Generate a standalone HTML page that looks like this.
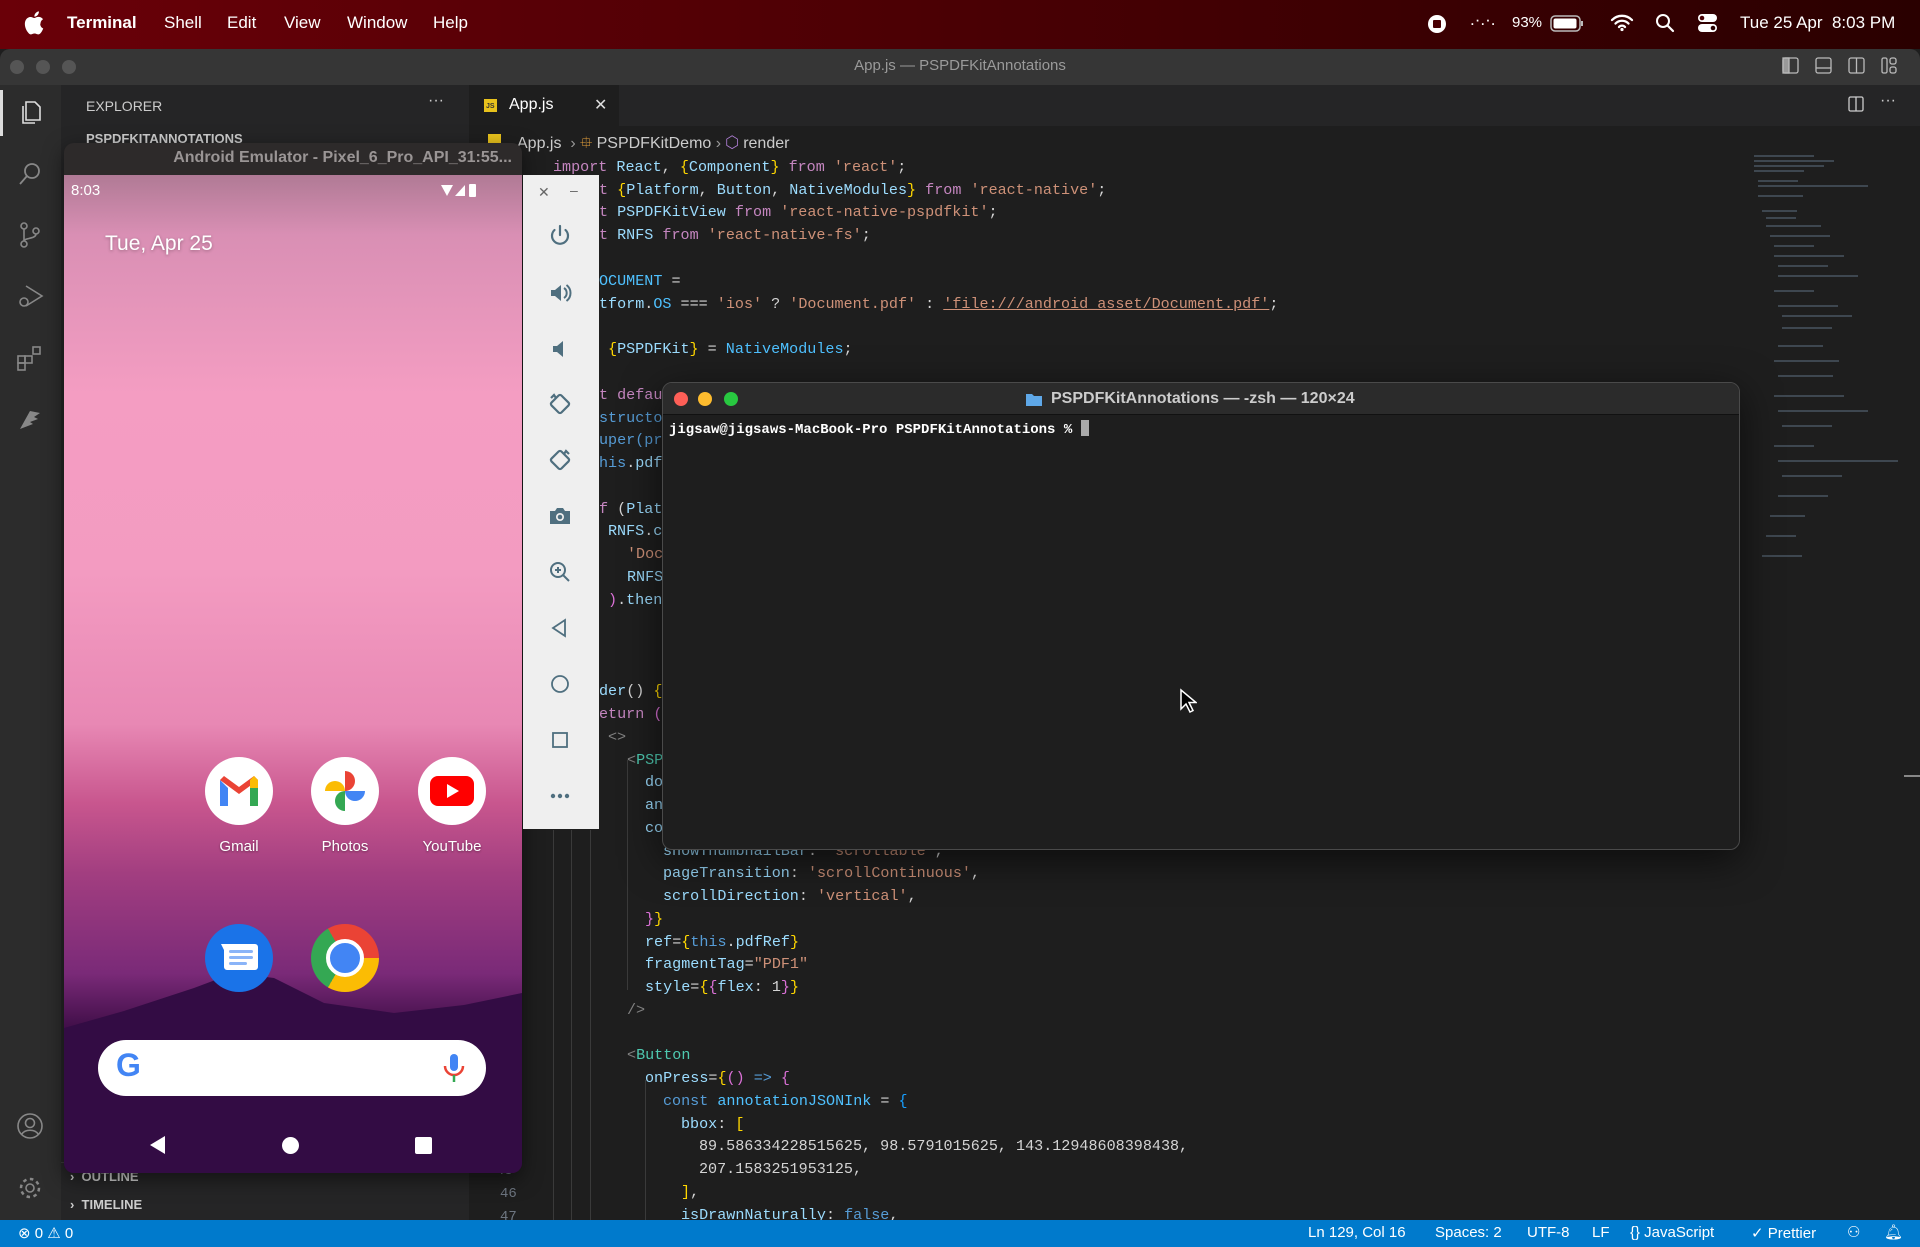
<!DOCTYPE html>
<html><head><meta charset="utf-8"><style>
*{margin:0;padding:0;box-sizing:border-box}
body{width:1920px;height:1247px;overflow:hidden;background:#1e1e1e;font-family:"Liberation Sans",sans-serif;position:relative}
.a{position:absolute}
.menu{left:0;top:0;width:1920px;height:49px;background:linear-gradient(90deg,#6a0008,#4a0004 50%,#2a0000);color:#fff;font-size:17px}
.menu span{position:absolute;top:13px}
.code{font-family:"Liberation Mono",monospace;font-size:15.1px;color:#d4d4d4;white-space:pre;line-height:22.8px}
.k{color:#c586c0}.v{color:#9cdcfe}.t{color:#4ec9b0}.f{color:#4fc1ff}.s{color:#ce9178}.y{color:#ffd700}.p{color:#da70d6}.b{color:#179fff}.c{color:#569cd6}.g{color:#808080}
.ti{position:absolute;left:548px;width:24px;height:24px}
.ic{position:absolute;width:68px;height:68px;border-radius:50%;background:#fff;display:flex;align-items:center;justify-content:center}
.lbl{position:absolute;color:#fff;font-size:15px;width:100px;text-align:center;text-shadow:0 1px 2px rgba(0,0,0,.4)}
.act{position:absolute;left:16px;width:28px;height:28px}
.mm{position:absolute;height:2px;background:#5a6a7a;opacity:.55}
</style></head><body>
<div class="a menu">
<svg class="a" style="left:24px;top:11px" width="20" height="24" viewBox="0 0 20 24"><path d="M16.5 12.7c0-3 2.4-4.4 2.5-4.5-1.4-2-3.5-2.3-4.3-2.3-1.8-.2-3.5 1.1-4.4 1.1-.9 0-2.3-1-3.8-1C4.6 6 2.8 7.2 1.8 9c-2 3.5-.5 8.7 1.5 11.5 1 1.4 2.1 2.9 3.6 2.9 1.4-.1 2-.9 3.7-.9s2.2.9 3.7.9c1.5 0 2.5-1.4 3.4-2.8 1.1-1.6 1.5-3.1 1.5-3.2 0 0-3-1.1-3-4.7zM13.7 4c.8-1 1.3-2.3 1.2-3.6-1.1.1-2.5.8-3.3 1.7-.7.8-1.4 2.2-1.2 3.5 1.3.1 2.5-.6 3.3-1.6z" fill="#fff"/></svg>
<span style="left:67px;font-weight:bold">Terminal</span>
<span style="left:164px">Shell</span>
<span style="left:227px">Edit</span>
<span style="left:284px">View</span>
<span style="left:347px">Window</span>
<span style="left:433px">Help</span>
<svg class="a" style="left:1427px;top:14px" width="20" height="20"><circle cx="10" cy="10" r="9" fill="#fff"/><rect x="6" y="6" width="8" height="8" rx="1" fill="#4a0004"/></svg>
<span style="left:1470px;top:10px">.·.·.</span>
<span style="left:1512px;font-size:15px;top:14px">93%</span>
<svg class="a" style="left:1550px;top:14px" width="36" height="20"><rect x="1" y="2" width="29" height="15" rx="4" fill="none" stroke="#bbb" stroke-width="1.5"/><rect x="3.5" y="4.5" width="23" height="10" rx="2" fill="#fff"/><rect x="31" y="7" width="2" height="5" fill="#bbb"/></svg>
<svg class="a" style="left:1610px;top:12px" width="24" height="20"><path d="M2 8a14 14 0 0 1 20 0M5.5 11.5a9 9 0 0 1 13 0M9 15a4 4 0 0 1 6 0" fill="none" stroke="#fff" stroke-width="2.3" stroke-linecap="round"/><circle cx="12" cy="17.5" r="1.6" fill="#fff"/></svg>
<svg class="a" style="left:1655px;top:13px" width="20" height="20"><circle cx="8" cy="8" r="6" fill="none" stroke="#fff" stroke-width="2"/><path d="M12.5 12.5L18 18" stroke="#fff" stroke-width="2.2" stroke-linecap="round"/></svg>
<svg class="a" style="left:1697px;top:12px" width="22" height="22"><rect x="1" y="2" width="19" height="8" rx="4" fill="#fff"/><circle cx="5" cy="6" r="2.3" fill="#4a0004"/><rect x="1" y="12" width="19" height="8" rx="4" fill="#fff"/><circle cx="16" cy="16" r="2.3" fill="#2a0000"/></svg>
<span style="left:1740px">Tue 25 Apr&nbsp; 8:03 PM</span>
</div>

<!-- window -->
<div class="a" style="left:0;top:49px;width:1920px;height:36px;background:#363636;border-radius:10px 10px 0 0"></div>
<div class="a" style="left:10px;top:60px;width:14px;height:14px;border-radius:50%;background:#555"></div>
<div class="a" style="top:60px;width:14px;height:14px;border-radius:50%;background:#555;left:36px"></div>
<div class="a" style="top:60px;width:14px;height:14px;border-radius:50%;background:#555;left:62px"></div>
<div class="a" style="left:0;width:1920px;top:57px;text-align:center;color:#9a9a9a;font-size:15px">App.js — PSPDFKitAnnotations</div>
<svg class="a" style="left:1782px;top:56px" width="130" height="20" fill="none" stroke="#bbb" stroke-width="1.3"><rect x="1" y="2" width="15" height="15" rx="2"/><rect x="1" y="2" width="6" height="15" fill="#999"/><rect x="34" y="2" width="15" height="15" rx="2"/><path d="M34 12h15"/><rect x="67" y="2" width="15" height="15" rx="2"/><path d="M74.5 2v15"/><rect x="100" y="2" width="5" height="15" rx="1.5"/><rect x="108" y="2" width="6" height="6" rx="2"/><rect x="108" y="11" width="6" height="6" rx="2"/></svg>

<div class="a" style="left:0;top:85px;width:61px;height:1135px;background:#2c2c2c"></div>
<div class="a" style="left:0;top:90px;width:3px;height:46px;background:#ddd"></div>
<svg class="act" style="top:98px" viewBox="0 0 28 28" fill="none" stroke="#ddd" stroke-width="1.6"><path d="M10 4h9l5 5v13H10z M7 8v17h12"/></svg>
<svg class="act" style="top:160px" viewBox="0 0 28 28" fill="none" stroke="#888" stroke-width="1.8"><circle cx="16" cy="11" r="7"/><path d="M11 16l-7 8"/></svg>
<svg class="act" style="top:221px" viewBox="0 0 28 28" fill="none" stroke="#888" stroke-width="1.6"><circle cx="8" cy="5" r="3"/><circle cx="8" cy="23" r="3"/><circle cx="20" cy="10" r="3"/><path d="M8 8v12M20 13c0 5-12 4-12 7"/></svg>
<svg class="act" style="top:282px" viewBox="0 0 28 28" fill="none" stroke="#888" stroke-width="1.6"><path d="M10 4l16 10-16 10"/><circle cx="8" cy="20" r="4"/></svg>
<svg class="act" style="top:344px" viewBox="0 0 28 28" fill="none" stroke="#888" stroke-width="1.6"><rect x="2" y="12" width="7" height="7"/><rect x="9" y="12" width="7" height="7"/><rect x="2" y="19" width="7" height="7"/><rect x="17" y="3" width="7" height="7"/></svg>
<svg class="act" style="top:405px" viewBox="0 0 28 28" fill="#888"><path d="M4 24L14 6l10 2-6 4 4 2-8 3 3 2z"/></svg>
<svg class="act" style="top:1112px" viewBox="0 0 28 28" fill="none" stroke="#888" stroke-width="1.6"><circle cx="14" cy="14" r="12"/><circle cx="14" cy="11" r="4.5"/><path d="M6 22c3-5 13-5 16 0"/></svg>
<svg class="act" style="top:1174px" viewBox="0 0 28 28" fill="none" stroke="#888" stroke-width="2.5"><circle cx="14" cy="14" r="9" stroke-dasharray="3.5 3.5"/><circle cx="14" cy="14" r="4" stroke-width="1.6"/></svg>

<div class="a" style="left:61px;top:85px;width:408px;height:1135px;background:#252526"></div>
<div class="a" style="left:86px;top:98px;color:#ccc;font-size:14px">EXPLORER</div>
<div class="a" style="left:428px;top:92px;color:#ccc;font-size:16px">···</div>
<div class="a" style="left:86px;top:131px;color:#ccc;font-size:13px;font-weight:bold">PSPDFKITANNOTATIONS</div>
<div class="a" style="left:61px;top:1162px;width:408px;height:1px;background:#3a3a3a"></div>
<div class="a" style="left:70px;top:1169px;color:#ccc;font-size:13px;font-weight:bold">›&nbsp; OUTLINE</div>
<div class="a" style="left:70px;top:1197px;color:#ccc;font-size:13px;font-weight:bold">›&nbsp; TIMELINE</div>

<div class="a" style="left:469px;top:85px;width:1451px;height:41px;background:#252526"></div>
<div class="a" style="left:469px;top:85px;width:150px;height:41px;background:#1e1e1e"></div>
<div class="a" style="left:484px;top:99px;width:13px;height:13px;background:#e8c21c;font-size:7px;color:#333;font-weight:bold;padding:4px 0 0 2px">JS</div>
<div class="a" style="left:509px;top:96px;color:#fff;font-size:16px">App.js</div>
<div class="a" style="left:594px;top:95px;color:#ddd;font-size:16px">✕</div>
<svg class="a" style="left:1848px;top:96px" width="16" height="16" fill="none" stroke="#ccc" stroke-width="1.3"><rect x="1" y="1" width="14" height="14" rx="1.5"/><path d="M8 1v14"/></svg>
<div class="a" style="left:1880px;top:92px;color:#ccc;font-size:16px">···</div>
<div class="a" style="left:488px;top:134px;width:13px;height:13px;background:#e8c21c"></div>
<div class="a" style="left:517px;top:132px;color:#ccc;font-size:16px">App.js &nbsp;<span style="color:#999">›</span> <span style="color:#e8a33c">⯐</span> PSPDFKitDemo <span style="color:#999">›</span> <span style="color:#b180d7">⬡</span> render</div>

<!-- code -->
<div class="a code" style="left:0;top:0;width:1740px;height:1220px">
<div class="a" style="left:553px;top:156px"><span class="k">import</span> <span class="v">React</span>, <span class="y">{</span><span class="v">Component</span><span class="y">}</span> <span class="k">from</span> <span class="s">'react'</span>;</div>
<div class="a" style="left:599px;top:179px"><span class="k">t</span> <span class="y">{</span><span class="v">Platform</span>, <span class="v">Button</span>, <span class="v">NativeModules</span><span class="y">}</span> <span class="k">from</span> <span class="s">'react-native'</span>;</div>
<div class="a" style="left:599px;top:201px"><span class="k">t</span> <span class="v">PSPDFKitView</span> <span class="k">from</span> <span class="s">'react-native-pspdfkit'</span>;</div>
<div class="a" style="left:599px;top:224px"><span class="k">t</span> <span class="v">RNFS</span> <span class="k">from</span> <span class="s">'react-native-fs'</span>;</div>
<div class="a" style="left:599px;top:270px"><span class="f">OCUMENT</span> =</div>
<div class="a" style="left:599px;top:293px"><span class="v">tform</span>.<span class="f">OS</span> === <span class="s">'ios'</span> ? <span class="s">'Document.pdf'</span> : <span class="s" style="text-decoration:underline">'file:///android_asset/Document.pdf'</span>;</div>
<div class="a" style="left:608px;top:338px"><span class="y">{</span><span class="v">PSPDFKit</span><span class="y">}</span> = <span class="f">NativeModules</span>;</div>
<div class="a" style="left:599px;top:384px"><span class="k">t defau</span></div>
<div class="a" style="left:599px;top:407px"><span class="c">structo</span></div>
<div class="a" style="left:599px;top:429px"><span class="c">uper(pr</span></div>
<div class="a" style="left:599px;top:452px"><span class="c">his</span>.<span class="v">pdf</span></div>
<div class="a" style="left:599px;top:498px"><span class="k">f</span> (<span class="v">Plat</span></div>
<div class="a" style="left:608px;top:520px"><span class="v">RNFS</span>.<span class="v">c</span></div>
<div class="a" style="left:627px;top:543px"><span class="s">'Doc</span></div>
<div class="a" style="left:627px;top:566px"><span class="v">RNFS</span></div>
<div class="a" style="left:608px;top:589px"><span class="p">)</span>.<span class="v">then</span></div>
<div class="a" style="left:599px;top:680px"><span class="v">der</span>() <span class="y">{</span></div>
<div class="a" style="left:599px;top:703px"><span class="k">eturn</span> <span class="p">(</span></div>
<div class="a" style="left:608px;top:726px"><span class="g">&lt;&gt;</span></div>
<div class="a" style="left:627px;top:749px"><span class="g">&lt;</span><span class="t">PSP</span></div>
<div class="a" style="left:645px;top:771px"><span class="v">do</span></div>
<div class="a" style="left:645px;top:794px"><span class="v">an</span></div>
<div class="a" style="left:645px;top:817px"><span class="v">co</span></div>
<div class="a" style="left:663px;top:840px"><span class="v">showThumbnailBar</span>: <span class="s">'scrollable'</span>,</div>
<div class="a" style="left:663px;top:862px"><span class="v">pageTransition</span>: <span class="s">'scrollContinuous'</span>,</div>
<div class="a" style="left:663px;top:885px"><span class="v">scrollDirection</span>: <span class="s">'vertical'</span>,</div>
<div class="a" style="left:645px;top:908px"><span class="p">}</span><span class="y">}</span></div>
<div class="a" style="left:645px;top:931px"><span class="v">ref</span>=<span class="y">{</span><span class="c">this</span>.<span class="v">pdfRef</span><span class="y">}</span></div>
<div class="a" style="left:645px;top:953px"><span class="v">fragmentTag</span>=<span class="s">"PDF1"</span></div>
<div class="a" style="left:645px;top:976px"><span class="v">style</span>=<span class="y">{</span><span class="p">{</span><span class="v">flex</span>: 1<span class="p">}</span><span class="y">}</span></div>
<div class="a" style="left:627px;top:999px"><span class="g">/&gt;</span></div>
<div class="a" style="left:627px;top:1044px"><span class="g">&lt;</span><span class="t">Button</span></div>
<div class="a" style="left:645px;top:1067px"><span class="v">onPress</span>=<span class="y">{</span><span class="p">()</span> <span class="c">=&gt;</span> <span class="p">{</span></div>
<div class="a" style="left:663px;top:1090px"><span class="c">const</span> <span class="f">annotationJSONInk</span> = <span class="b">{</span></div>
<div class="a" style="left:681px;top:1113px"><span class="v">bbox</span>: <span class="y">[</span></div>
<div class="a" style="left:699px;top:1135px">89.586334228515625, 98.5791015625, 143.12948608398438,</div>
<div class="a" style="left:699px;top:1158px">207.1583251953125,</div>
<div class="a" style="left:681px;top:1181px"><span class="y">]</span>,</div>
<div class="a" style="left:681px;top:1204px"><span class="v">isDrawnNaturally</span>: <span class="c">false</span>,</div>
<div class="a" style="left:496px;top:1160px;color:#6e7681;font-size:14px">45</div>
<div class="a" style="left:500px;top:1183px;color:#6e7681;font-size:14px">46</div>
<div class="a" style="left:500px;top:1206px;color:#6e7681;font-size:14px">47</div>
</div>
<div class="a" style="left:553px;top:830px;width:1px;height:390px;background:#3a3a3a"></div>
<div class="a" style="left:571px;top:830px;width:1px;height:390px;background:#3a3a3a"></div>
<div class="a" style="left:590px;top:830px;width:1px;height:390px;background:#3a3a3a"></div>
<div class="a" style="left:627px;top:760px;width:1px;height:230px;background:#3a3a3a"></div>
<div class="a" style="left:645px;top:1080px;width:1px;height:140px;background:#3a3a3a"></div>

<!-- minimap -->
<div class="a" style="left:1754px;top:155px;width:140px;height:450px">
<div class="mm" style="left:0;top:0;width:60px"></div><div class="mm" style="left:0;top:5px;width:80px"></div><div class="mm" style="left:0;top:10px;width:70px"></div><div class="mm" style="left:0;top:15px;width:50px"></div>
<div class="mm" style="left:4px;top:25px;width:40px"></div><div class="mm" style="left:4px;top:30px;width:110px"></div><div class="mm" style="left:4px;top:40px;width:45px"></div>
<div class="mm" style="left:8px;top:55px;width:35px"></div><div class="mm" style="left:12px;top:62px;width:30px"></div><div class="mm" style="left:12px;top:70px;width:55px"></div>
<div class="mm" style="left:16px;top:80px;width:60px"></div><div class="mm" style="left:20px;top:90px;width:40px"></div><div class="mm" style="left:20px;top:100px;width:70px"></div>
<div class="mm" style="left:24px;top:110px;width:50px"></div><div class="mm" style="left:24px;top:120px;width:80px"></div><div class="mm" style="left:20px;top:135px;width:40px"></div>
<div class="mm" style="left:24px;top:150px;width:60px"></div><div class="mm" style="left:28px;top:160px;width:70px"></div><div class="mm" style="left:28px;top:172px;width:50px"></div>
<div class="mm" style="left:24px;top:190px;width:45px"></div><div class="mm" style="left:20px;top:205px;width:65px"></div><div class="mm" style="left:24px;top:220px;width:55px"></div>
<div class="mm" style="left:20px;top:240px;width:70px"></div><div class="mm" style="left:24px;top:255px;width:90px"></div><div class="mm" style="left:28px;top:270px;width:50px"></div>
<div class="mm" style="left:20px;top:290px;width:40px"></div><div class="mm" style="left:24px;top:305px;width:120px"></div><div class="mm" style="left:28px;top:320px;width:60px"></div>
<div class="mm" style="left:24px;top:340px;width:50px"></div><div class="mm" style="left:16px;top:360px;width:35px"></div><div class="mm" style="left:12px;top:380px;width:30px"></div><div class="mm" style="left:8px;top:400px;width:40px"></div>
</div>
<div class="a" style="left:1904px;top:775px;width:16px;height:2px;background:#888"></div>

<!-- status bar -->
<div class="a" style="left:0;top:1220px;width:1920px;height:27px;background:#007acc;color:#fff;font-size:15px">
<span class="a" style="left:18px;top:4px">⊗ 0 ⚠ 0</span>
<span class="a" style="left:1308px;top:4px">Ln 129, Col 16</span>
<span class="a" style="left:1435px;top:4px">Spaces: 2</span>
<span class="a" style="left:1527px;top:4px">UTF-8</span>
<span class="a" style="left:1592px;top:4px">LF</span>
<span class="a" style="left:1630px;top:4px">{} JavaScript</span>
<span class="a" style="left:1751px;top:4px">✓ Prettier</span>
<span class="a" style="left:1847px;top:3px">⚇</span>
<span class="a" style="left:1884px;top:3px">🔔︎</span>
</div>

<!-- emulator -->
<div class="a" style="left:64px;top:143px;width:458px;height:1030px;border-radius:10px;overflow:hidden;box-shadow:0 6px 20px rgba(0,0,0,.5)">
<div class="a" style="left:0;top:0;width:458px;height:32px;background:#2d2a2a;color:#9a9595;font-size:16px;font-weight:bold;text-align:right;padding:6px 10px 0 0">Android Emulator - Pixel_6_Pro_API_31:55...</div>
<div class="a" style="left:0;top:32px;width:458px;height:998px;background:linear-gradient(180deg,#b07a95 0%,#d98fb4 6%,#f49dc2 22%,#f39bc1 40%,#e888b4 55%,#c8568e 63%,#a23e80 70%,#7a2a78 80%,#3b0c44 86%,#2a0834 100%)"></div>
<svg class="a" style="left:0;top:790px" width="458" height="240"><path d="M0 95 L60 78 L130 55 L170 40 L210 45 L260 70 L330 80 L400 72 L458 60 L458 240 L0 240Z" fill="#330c44"/></svg>
<div class="a" style="left:7px;top:39px;color:#fff;font-size:15px">8:03</div>
<svg class="a" style="left:377px;top:40px" width="40" height="16" fill="#fff"><path d="M0 2h12l-6 11z"/><path d="M14 13L24 2v11z"/><rect x="28" y="1" width="7" height="13" rx="1"/></svg>
<div class="a" style="left:41px;top:89px;color:#fff;font-size:21px;text-shadow:0 1px 3px rgba(0,0,0,.3)">Tue, Apr 25</div>
<div class="ic" style="left:141px;top:614px"><svg width="42" height="34" viewBox="0 0 42 34"><path d="M2 6v26h8V14z" fill="#4285f4"/><path d="M40 6v26h-8V14z" fill="#34a853"/><path d="M2 6l19 14 19-14-4-4-15 11L6 2z" fill="#ea4335"/><path d="M36 2l4 4v8l-8 0V6z" fill="#fbbc04"/></svg></div>
<div class="ic" style="left:247px;top:614px"><svg width="44" height="44" viewBox="0 0 44 44"><path d="M22 22V2a10 10 0 0 1 0 20z" fill="#ea4335"/><path d="M22 22H2a10 10 0 0 1 20 0z" fill="#fbbc04"/><path d="M22 22v20a10 10 0 0 1 0-20z" fill="#34a853"/><path d="M22 22h20a10 10 0 0 1-20 0z" fill="#4285f4"/></svg></div>
<div class="ic" style="left:354px;top:614px"><svg width="46" height="34"><rect x="1" y="2" width="44" height="30" rx="8" fill="#f00"/><path d="M18 10l12 7-12 7z" fill="#fff"/></svg></div>
<div class="lbl" style="left:125px;top:695px">Gmail</div>
<div class="lbl" style="left:231px;top:695px">Photos</div>
<div class="lbl" style="left:338px;top:695px">YouTube</div>
<div class="ic" style="left:141px;top:781px;background:#1a73e8"><svg width="40" height="32"><path d="M2 2h34a3 3 0 0 1 3 3v20a3 3 0 0 1-3 3H8a3 3 0 0 1-3-3V8z" fill="#fff"/><rect x="10" y="8" width="24" height="3" rx="1.5" fill="#8ab4f8"/><rect x="10" y="14" width="24" height="3" rx="1.5" fill="#8ab4f8"/><rect x="10" y="20" width="18" height="3" rx="1.5" fill="#8ab4f8"/></svg></div>
<div class="ic" style="left:247px;top:781px;background:conic-gradient(from -30deg,#ea4335 0 120deg,#fbbc04 120deg 240deg,#34a853 240deg 360deg)"><div style="width:30px;height:30px;border-radius:50%;background:#4285f4;border:4px solid #fff;box-sizing:content-box"></div></div>
<div class="a" style="left:34px;top:897px;width:388px;height:56px;border-radius:28px;background:#fff"></div>
<div class="a" style="left:52px;top:904px;font-size:32px;font-weight:bold;color:#4285f4">G</div>
<svg class="a" style="left:378px;top:909px" width="24" height="32"><rect x="8" y="2" width="8" height="17" rx="4" fill="#4285f4"/><path d="M3 14a9 9 0 0 0 18 0" fill="none" stroke="#ea4335" stroke-width="2.5"/><path d="M12 23v7" stroke="#34a853" stroke-width="2.5"/></svg>
<svg class="a" style="left:84px;top:992px" width="20" height="20"><path d="M17 1v18L2 10z" fill="#fff"/></svg>
<div class="a" style="left:218px;top:994px;width:17px;height:17px;border-radius:50%;background:#fff"></div>
<div class="a" style="left:351px;top:994px;width:17px;height:17px;border-radius:2px;background:#fff"></div>
</div>
<!-- toolbar -->
<div class="a" style="left:523px;top:175px;width:76px;height:654px;background:#efefef"></div>
<div class="a" style="left:538px;top:184px;color:#666;font-size:14px">✕</div>
<div class="a" style="left:570px;top:182px;color:#666;font-size:14px">–</div>
<svg class="ti" style="top:224px" viewBox="0 0 24 24" fill="none" stroke="#4f6f7f" stroke-width="2.2" stroke-linecap="round"><path d="M12 2v9M6.5 6a8 8 0 1 0 11 0"/></svg>
<svg class="ti" style="top:281px" viewBox="0 0 24 24" fill="#4f6f7f"><path d="M3 9h4l6-5v16l-6-5H3z"/><path d="M16 7a6 6 0 0 1 0 10M18.5 4a10 10 0 0 1 0 16" fill="none" stroke="#4f6f7f" stroke-width="2"/></svg>
<svg class="ti" style="top:337px" viewBox="0 0 24 24" fill="#4f6f7f"><path d="M5 9h4l6-5v16l-6-5H5z"/></svg>
<svg class="ti" style="top:392px" viewBox="0 0 24 24" fill="none" stroke="#4f6f7f" stroke-width="2.2"><rect x="5" y="5" width="14" height="14" rx="2" transform="rotate(45 12 12)"/><path d="M3 6l3-3 2 3"/></svg>
<svg class="ti" style="top:448px" viewBox="0 0 24 24" fill="none" stroke="#4f6f7f" stroke-width="2.2"><rect x="5" y="5" width="14" height="14" rx="2" transform="rotate(45 12 12)"/><path d="M21 6l-3-3-2 3"/></svg>
<svg class="ti" style="top:504px" viewBox="0 0 24 24" fill="#4f6f7f"><path d="M2 7h5l2-3h6l2 3h5v13H2z"/><circle cx="12" cy="13" r="4" fill="#efefef"/><circle cx="12" cy="13" r="2.3"/></svg>
<svg class="ti" style="top:560px" viewBox="0 0 24 24" fill="none" stroke="#4f6f7f" stroke-width="2"><circle cx="10" cy="10" r="7"/><path d="M15 15l6 6M7 10h6M10 7v6"/></svg>
<svg class="ti" style="top:616px" viewBox="0 0 24 24" fill="none" stroke="#4f6f7f" stroke-width="1.8"><path d="M17 4v16L5 12z"/></svg>
<svg class="ti" style="top:672px" viewBox="0 0 24 24" fill="none" stroke="#4f6f7f" stroke-width="1.8"><circle cx="12" cy="12" r="8"/></svg>
<svg class="ti" style="top:728px" viewBox="0 0 24 24" fill="none" stroke="#4f6f7f" stroke-width="1.8"><rect x="5" y="5" width="14" height="14"/></svg>
<svg class="ti" style="top:784px" viewBox="0 0 24 24" fill="#4f6f7f"><circle cx="5" cy="12" r="2.2"/><circle cx="12" cy="12" r="2.2"/><circle cx="19" cy="12" r="2.2"/></svg>

<!-- terminal -->
<div class="a" style="left:662px;top:382px;width:1078px;height:468px;background:#1e1e1e;border-radius:10px;border:1px solid #4a4a4a;overflow:hidden;box-shadow:0 10px 40px rgba(0,0,0,.6)">
<div class="a" style="left:0;top:0;width:1078px;height:32px;background:#2b2b2b;border-bottom:1px solid #111"></div>
<div class="a" style="left:11px;top:9px;width:14px;height:14px;border-radius:50%;background:#fe5f57"></div>
<div class="a" style="left:35px;top:9px;width:14px;height:14px;border-radius:50%;background:#febc2e"></div>
<div class="a" style="left:61px;top:9px;width:14px;height:14px;border-radius:50%;background:#28c840"></div>
<svg class="a" style="left:362px;top:8px" width="18" height="16"><path d="M1 3h6l2 2h8v10H1z" fill="#5fa8e8"/></svg>
<div class="a" style="left:388px;top:7px;color:#ccc;font-size:16px;font-weight:bold">PSPDFKitAnnotations — -zsh — 120×24</div>
<div class="a" style="left:6px;top:37px;color:#fff;font-family:'Liberation Mono',monospace;font-size:14px;font-weight:bold">jigsaw@jigsaws-MacBook-Pro PSPDFKitAnnotations % <span style="display:inline-block;width:8px;height:16px;background:#aaa;vertical-align:-3px"></span></div>
</div>
<svg class="a" style="left:1179px;top:688px" width="18" height="26"><path d="M2 2v19l5-5 4 8 3-1.5-4-8h7z" fill="#000" stroke="#fff" stroke-width="1.5"/></svg>
</body></html>
